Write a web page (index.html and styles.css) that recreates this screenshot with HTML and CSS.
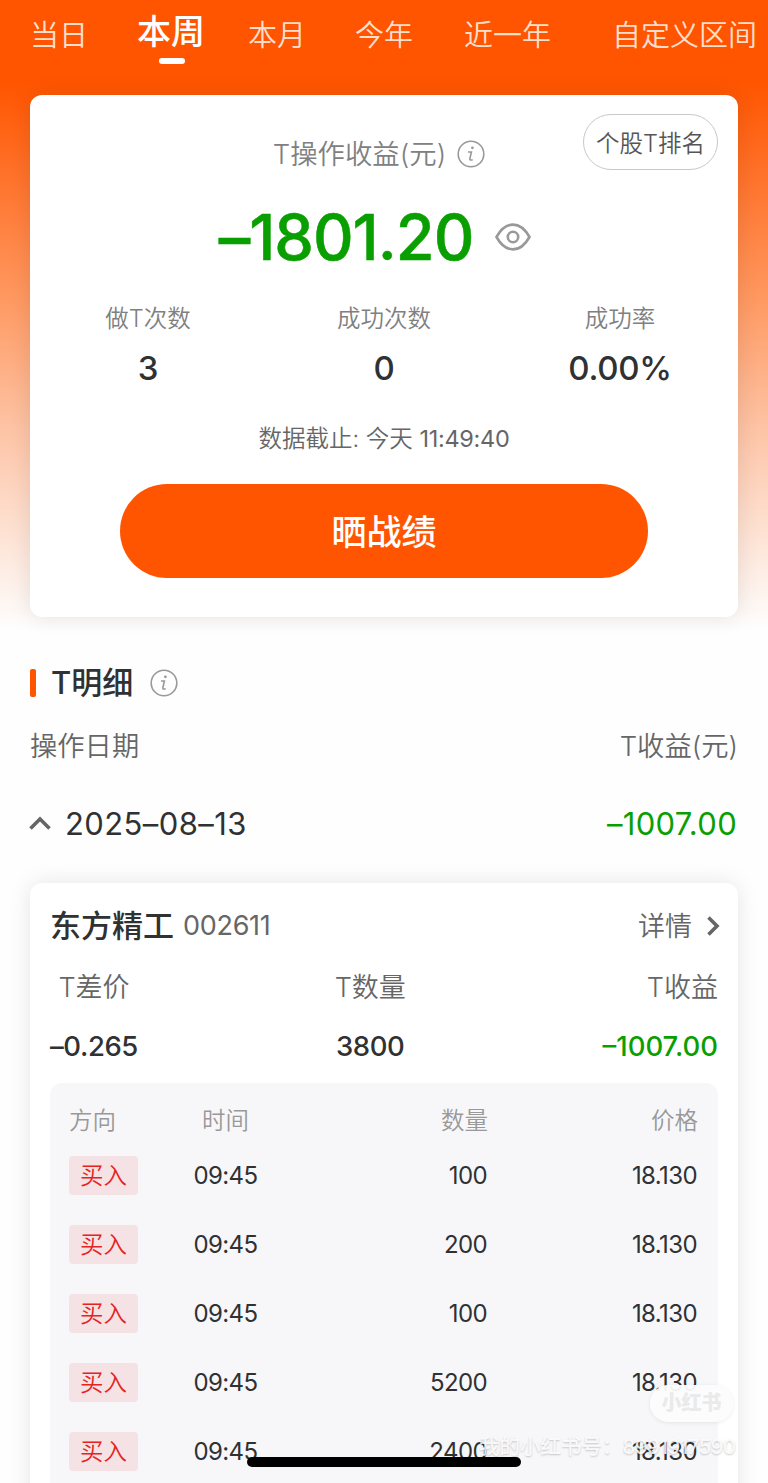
FILE: index.html
```html
<!DOCTYPE html>
<html lang="zh-CN">
<head>
  <meta charset="UTF-8" />
  <meta name="viewport" content="width=device-width, initial-scale=1.0"/>
  <title>T操作收益</title>
  <link rel="stylesheet" href="styles.css">
</head>
<body>

  <div class="page">
    <nav class="tabs">
      <a class="tab">当日</a>
      <a class="tab active">本周</a>
      <a class="tab">本月</a>
      <a class="tab">今年</a>
      <a class="tab year">近一年</a>
      <a class="tab custom">自定义区间</a>
    </nav>

    <!-- Summary -->
    <section class="summary card">
      <button class="rank">个股T排名</button>
      <div class="summary-title">
        <span>T操作收益(元)</span>
        <svg class="info" viewBox="0 0 28 28"><circle cx="14" cy="14" r="12.8"/><path d="M11 12h3.400l-1.600 7q-.2 1.700 2.900.7"/><circle class="dot" cx="15.400" cy="7.800" r="1.400"/></svg>
      </div>
      <div class="total">
        <span class="amount">–1801.20</span>
        <svg class="eye" viewBox="0 0 36 28"><path d="M1.500 14C6 6 11 1.600 18 1.600S30 6 34.500 14C30 22 25 26.400 18 26.400S6 22 1.500 14Z"/><circle cx="18" cy="14" r="5.200"/></svg>
      </div>
      <div class="stats">
        <div class="stat"><span>做T次数</span><b>3</b></div>
        <div class="stat"><span>成功次数</span><b>0</b></div>
        <div class="stat"><span>成功率</span><b>0.00%</b></div>
      </div>
      <p class="deadline">数据截止: 今天 <span class="clock">11:49:40</span></p>
      <button class="share">晒战绩</button>
    </section>

    <!-- Detail list -->
    <h2 class="section-title">
      <i class="bar"></i>
      <span class="label">T明细</span>
      <svg class="info" viewBox="0 0 28 28"><circle cx="14" cy="14" r="12.8"/><path d="M11 12h3.400l-1.600 7q-.2 1.700 2.900.7"/><circle class="dot" cx="15.400" cy="7.800" r="1.400"/></svg>
    </h2>
    <div class="list-head"><span>操作日期</span><span>T收益(元)</span></div>
    <div class="day">
      <svg class="arrow-up" viewBox="0 0 22 14"><path d="M1.500 12.500 11 3l9.500 9.500"/></svg>
      <span class="date">2025–08–13</span>
      <span class="day-profit">–1007.00</span>
    </div>

    <section class="stock card">
      <div class="stock-head">
        <span class="name">东方精工</span>
        <span class="code">002611</span>
        <span class="more">详情</span>
        <svg class="arrow-right" viewBox="0 0 14 22"><path d="M2.500 2.500 11 11l-8.500 8.500"/></svg>
      </div>
      <div class="figures">
        <div class="figure"><span>T差价</span><b>–0.265</b></div>
        <div class="figure"><span>T数量</span><b>3800</b></div>
        <div class="figure right"><span>T收益</span><b class="green">–1007.00</b></div>
      </div>
      <div class="trades">
        <div class="trade head"><span>方向</span><span class="time">时间</span><span class="num">数量</span><span class="num">价格</span></div>
        <div class="trade"><span class="buy">买入</span><span class="time">09:45</span><span class="num">100</span><span class="num">18.130</span></div>
        <div class="trade"><span class="buy">买入</span><span class="time">09:45</span><span class="num">200</span><span class="num">18.130</span></div>
        <div class="trade"><span class="buy">买入</span><span class="time">09:45</span><span class="num">100</span><span class="num">18.130</span></div>
        <div class="trade"><span class="buy">买入</span><span class="time">09:45</span><span class="num">5200</span><span class="num">18.130</span></div>
        <div class="trade"><span class="buy">买入</span><span class="time">09:45</span><span class="num">2400</span><span class="num">18.130</span></div>
      </div>
    </section>

    <div class="logo-mark">小红书</div>
    <div class="account-mark">我的小红书号：<span>8991917590</span></div>
    <div class="home-bar"></div>
  </div>

</body>
</html>
```

FILE: styles.css
```css
* {
  box-sizing: border-box;
}

body {
  margin: 0;
  font-family: Inter, 'Noto Sans CJK SC', sans-serif;
  font-weight: 350;
  color: #303133;
  background: #fefefe;
}

button {
  font-family: inherit;
  padding: 0;
}

.page {
  position: relative;
  height: 1483px;
  padding: 0 30px;
  overflow: hidden;
  background: linear-gradient(to bottom, #ff5500 0, #ff5500 82px, #ff9962 300px, #fdc4a6 430px, #fefefe 630px);
}

.card {
  background: #fff;
  border-radius: 12px;
  box-shadow: 0 0 22px rgba(0, 0, 0, 0.1);
}

/* Tabs */
.tabs {
  display: flex;
  height: 95px;
  gap: 49px;
  white-space: nowrap;
}

.tab {
  font-size: 29px;
  line-height: 40px;
  padding-top: 16px;
  color: #ffdfcc;
}

.tab.active {
  position: relative;
  margin-right: -6px;
  padding-top: 12px;
  font-size: 34px;
  font-weight: 500;
  color: #fff;
}

.tab.active::after {
  content: '';
  position: absolute;
  left: 22px;
  top: 58px;
  width: 26px;
  height: 6px;
  border-radius: 3px;
  background: #fff;
}

.tab.year {
  margin-left: 2px;
}

.tab.custom {
  margin-left: 12px;
}

/* Summary */
.summary {
  position: relative;
  display: flex;
  flex-direction: column;
  align-items: center;
  height: 522px;
  padding-top: 39px;
}

.rank {
  position: absolute;
  top: 19px;
  right: 20px;
  width: 135px;
  height: 56px;
  padding-bottom: 1px;
  border: 1px solid #c8c8c8;
  border-radius: 28px;
  background: #fff;
  font-size: 23.5px;
  font-weight: 350;
  color: #555;
}

.summary-title {
  display: flex;
  align-items: center;
  gap: 11px;
  height: 40px;
  padding-right: 10px;
  font-size: 27.4px;
  color: #808080;
}

.summary-title span {
  padding-bottom: 4px;
}

.info {
  width: 28px;
  height: 28px;
  fill: none;
  stroke: #999;
  stroke-width: 1.6;
}

.info .dot {
  fill: #999;
  stroke: none;
}

.total {
  display: flex;
  align-items: center;
  gap: 22px;
  height: 76px;
  margin-top: 25px;
  padding-right: 18px;
}

.amount {
  font-size: 63px;
  font-weight: 500;
  letter-spacing: -1px;
  color: #0a9f00;
  -webkit-text-stroke: 0.5px #0a9f00;
}

.eye {
  width: 36px;
  height: 28px;
  fill: none;
  stroke: #999;
  stroke-width: 2.6;
}

.stats {
  display: flex;
  width: 708px;
  margin-top: 26px;
}

.stat {
  flex: 1;
  display: flex;
  flex-direction: column;
  align-items: center;
  font-size: 23.5px;
  line-height: 36px;
  color: #808080;
}

.stat b {
  margin-top: 11px;
  font-size: 33px;
  line-height: 40px;
  font-weight: 500;
  letter-spacing: -0.3px;
  color: #303133;
}

.deadline {
  margin: 33px 0 0;
  font-size: 23.5px;
  line-height: 36px;
  color: #666;
}

.clock {
  font-weight: 400;
  letter-spacing: -0.3px;
}

.share {
  width: 528px;
  height: 94px;
  margin-top: 27px;
  padding-bottom: 3px;
  border: 0;
  border-radius: 47px;
  background: #ff5500;
  color: #fff;
  font-size: 35px;
  font-weight: 500;
}

/* Detail list */
.section-title {
  display: flex;
  align-items: center;
  height: 40px;
  margin: 46px 0 0;
  font-size: 31px;
  font-weight: 500;
}

.bar {
  width: 6px;
  height: 28px;
  margin-right: 15px;
  border-radius: 2px;
  background: #ff5500;
}

.label {
  padding-bottom: 6px;
}

.section-title .info {
  margin-left: 17px;
}

.list-head {
  display: flex;
  justify-content: space-between;
  margin-top: 24px;
  font-size: 27.3px;
  line-height: 40px;
  color: #666;
}

.day {
  display: flex;
  align-items: center;
  height: 40px;
  margin-top: 36px;
  padding-right: 1px;
  font-size: 31px;
  font-weight: 400;
}

.arrow-up {
  width: 22px;
  height: 14px;
  margin-left: -1px;
  margin-right: 14px;
  fill: none;
  stroke: #666;
  stroke-width: 3.6;
}

.date {
  letter-spacing: 0.4px;
}

.day-profit {
  margin-left: auto;
  letter-spacing: 0.3px;
  color: #0a9f00;
}

/* Stock card */
.stock {
  margin-top: 40px;
  padding: 22px 20px 0;
  height: 640px;
}

.stock-head {
  display: flex;
  align-items: center;
  height: 42px;
}

.name {
  padding-bottom: 5px;
  font-size: 31px;
  font-weight: 500;
}

.code {
  margin-left: 9px;
  padding-bottom: 2px;
  font-size: 27px;
  font-weight: 400;
  letter-spacing: -0.3px;
  color: #666;
}

.more {
  margin-left: auto;
  padding-bottom: 3px;
  font-size: 27px;
  color: #666;
}

.arrow-right {
  width: 14px;
  height: 22px;
  margin-left: 14px;
  margin-right: -2px;
  fill: none;
  stroke: #666;
  stroke-width: 3.6;
}

.figures {
  display: flex;
  justify-content: space-between;
  margin-top: 21px;
}

.figure {
  display: flex;
  flex-direction: column;
  align-items: center;
  font-size: 27px;
  line-height: 40px;
  color: #666;
}

.figure.right {
  align-items: flex-end;
}

.figure b {
  margin-top: 18px;
  font-size: 27.5px;
  font-weight: 500;
  letter-spacing: -0.4px;
  color: #303133;
}

.figure b.green {
  letter-spacing: 0;
  color: #0a9f00;
}

.trades {
  margin-top: 17px;
  height: 420px;
  padding: 18px 20px 0 19px;
  border-radius: 12px;
  background: #f7f7fa;
}

.trade {
  display: grid;
  grid-template-columns: 69px 175px 175px 210px;
  align-items: center;
  height: 39px;
  margin-bottom: 30px;
  font-size: 24px;
  font-weight: 400;
  letter-spacing: -0.6px;
}

.trade.head {
  height: 36px;
  margin-bottom: 19px;
  font-size: 23.5px;
  font-weight: 350;
  letter-spacing: 0;
  color: #999;
}

.time {
  text-align: center;
}

.num {
  text-align: right;
}

.trade:not(.head) .num {
  padding-right: 1px;
}

.buy {
  line-height: 39px;
  border-radius: 4px;
  background: #f5e2e5;
  text-align: center;
  font-size: 23.5px;
  font-weight: 350;
  letter-spacing: 0;
  color: #e62323;
}

/* Overlays */
.logo-mark {
  position: absolute;
  left: 650px;
  top: 1385px;
  width: 83px;
  height: 37px;
  border-radius: 19px;
  background: rgba(252, 252, 253, 0.95);
  box-shadow: 0 1px 4px rgba(0, 0, 0, 0.08);
  text-align: center;
  font-size: 20px;
  line-height: 36px;
  font-weight: 900;
  color: #eaeaeb;
}

.account-mark {
  position: absolute;
  left: 479px;
  top: 1432px;
  font-size: 20.5px;
  line-height: 30px;
  font-weight: 500;
  white-space: nowrap;
  color: rgba(255, 255, 255, 0.85);
  text-shadow: 0 1px 2px rgba(0, 0, 0, 0.2);
}

.account-mark span {
  letter-spacing: -0.6px;
}

.home-bar {
  position: absolute;
  left: 247px;
  top: 1457px;
  width: 274px;
  height: 10px;
  border-radius: 5px;
  background: #000;
}
```
